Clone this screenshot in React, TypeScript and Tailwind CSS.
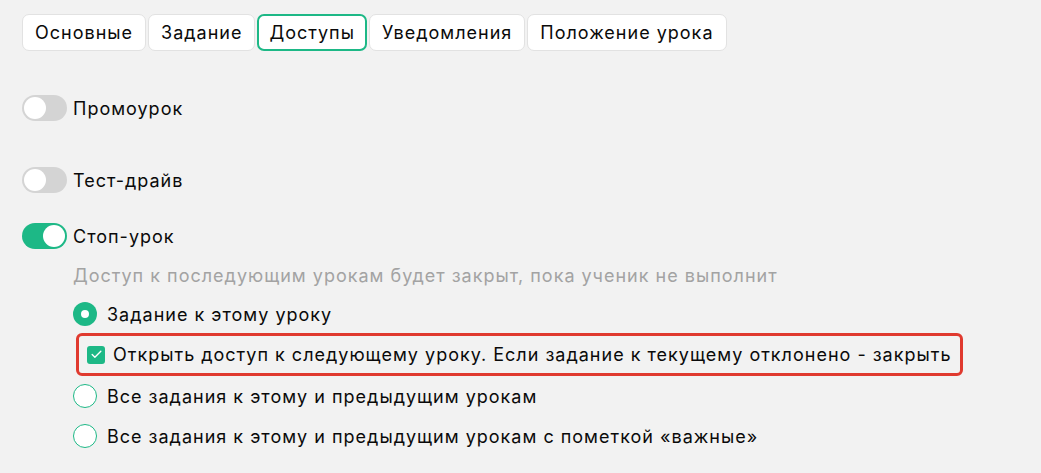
import { Check } from "lucide-react";

const tabs = ["Основные", "Задание", "Доступы", "Уведомления", "Положение урока"];

const Toggle = ({ on = false, label }: { on?: boolean; label: string }) => (
  <div className="flex items-center gap-[6px] h-[26px]">
    <div
      className={`w-[45px] h-[26px] rounded-full p-[2px] flex ${
        on ? "bg-[#1db886] justify-end" : "bg-[#d4d4d4] justify-start"
      }`}
    >
      <div className="w-[22px] h-[22px] rounded-full bg-white" />
    </div>
    <span>{label}</span>
  </div>
);

const Radio = ({ checked = false, label }: { checked?: boolean; label: string }) => (
  <div className="flex items-center gap-[10px] h-[24px]">
    {checked ? (
      <div className="w-[24px] h-[24px] rounded-full bg-[#1db886] flex items-center justify-center">
        <div className="w-[8px] h-[8px] rounded-full bg-white" />
      </div>
    ) : (
      <div className="w-[24px] h-[24px] rounded-full bg-white border-[1.5px] border-[#1db886]" />
    )}
    <span>{label}</span>
  </div>
);

export default function App() {
  return (
    <div className="min-h-screen bg-[#f2f2f2] pl-[22px] pt-[14px] font-['Inter',sans-serif] text-[18px] tracking-[1px] text-[#0a0a0a]">
      <div className="flex gap-[2px]">
        {tabs.map((t, i) => (
          <div
            key={t}
            className={`h-[37px] flex items-center rounded-[7px] bg-white ${
              i === 2
                ? "px-[10px] border-2 border-[#1db886]"
                : "px-[12px] border border-[#e2e2e2]"
            }`}
          >
            {t}
          </div>
        ))}
      </div>

      <div className="mt-[44px]">
        <Toggle label="Промоурок" />
      </div>
      <div className="mt-[46px]">
        <Toggle label="Тест-драйв" />
      </div>
      <div className="mt-[30px]">
        <Toggle on label="Стоп-урок" />
      </div>

      <div className="ml-[51px]">
        <div className="mt-[15px] h-[24px] leading-[24px] text-[#a3a3a3]">
          Доступ к последующим урокам будет закрыт, пока ученик не выполнит
        </div>
        <div className="mt-[14px]">
          <Radio checked label="Задание к этому уроку" />
        </div>
        <div className="mt-[7px] ml-[3px] w-[887px] h-[43px] border-[3px] border-[#e03a2f] rounded-[6px] flex items-center gap-[8px] pl-[8px]">
          <div className="w-[18px] h-[18px] rounded-[3px] bg-[#1db886] flex items-center justify-center">
            <Check className="w-[13px] h-[13px] text-white" strokeWidth={2.5} />
          </div>
          <span>Открыть доступ к следующему уроку. Если задание к текущему отклонено - закрыть</span>
        </div>
        <div className="mt-[8px]">
          <Radio label="Все задания к этому и предыдущим урокам" />
        </div>
        <div className="mt-[16px]">
          <Radio label="Все задания к этому и предыдущим урокам с пометкой «важные»" />
        </div>
      </div>
    </div>
  );
}
